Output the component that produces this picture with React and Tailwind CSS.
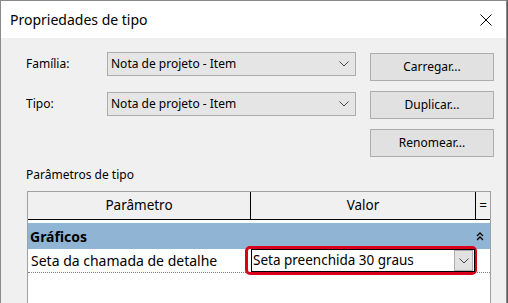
import React from 'react';

const ChevronDown = ({ className = '' }) => (
  <svg width="10" height="6" viewBox="0 0 10 6" className={className}>
    <path d="M0.5 0.5 L5 5 L9.5 0.5" fill="none" stroke="#444" strokeWidth="1" />
  </svg>
);

function Combo({ value }) {
  return (
    <div className="w-[249px] h-[24px] bg-[#e5e5e5] border border-[#adadad] flex items-center pl-[3px] pr-[6px]">
      <span className="flex-1 text-[12px] text-black">{value}</span>
      <ChevronDown />
    </div>
  );
}

function Button({ children, className = '' }) {
  return (
    <div className={`w-[124px] h-[28px] bg-[#e1e1e1] border border-[#adadad] flex items-center justify-center text-[12px] text-black ${className}`}>
      {children}
    </div>
  );
}

export default function App() {
  return (
    <div className="w-[508px] h-[303px] overflow-hidden bg-[#5b5b5b] font-['Noto_Sans',sans-serif]">
      <div className="w-[507px] h-[303px] border border-b-0 border-[#8a8a8a] flex flex-col">
        {/* Title bar */}
        <div className="h-[37px] bg-white flex items-center pl-[9px] pr-[14px] shrink-0">
          <span className="flex-1 text-[14px] text-black">Propriedades de tipo</span>
          <svg width="12" height="12" viewBox="0 0 12 12">
            <path d="M0.5 0.5 L11.5 11.5 M11.5 0.5 L0.5 11.5" stroke="#000" strokeWidth="1" />
          </svg>
        </div>

        {/* Body */}
        <div className="flex-1 bg-[#f0f0f0] pl-[25px] pt-[14px] flex flex-col">
          <div className="flex items-start h-[39px]">
            <span className="w-[81px] leading-[24px] text-[12px] text-black">Família:</span>
            <Combo value="Nota de projeto - Item" />
            <Button className="ml-[14px] mt-[1px]">Carregar...</Button>
          </div>
          <div className="flex items-start h-[38px]">
            <span className="w-[81px] leading-[24px] mt-[1px] text-[12px] text-black">Tipo:</span>
            <div className="mt-[1px]">
              <Combo value="Nota de projeto - Item" />
            </div>
            <Button className="ml-[14px]">Duplicar...</Button>
          </div>
          <div className="flex h-[28px]">
            <Button className="ml-[344px]">Renomear...</Button>
          </div>

          <div className="mt-[10px] h-[16px] leading-[16px] text-[12px] text-black">Parâmetros de tipo</div>

          {/* Table */}
          <div className="mt-[8px] ml-[1px] w-[464px] flex-1 bg-white border-l border-r border-t border-[#a0a0a0] flex flex-col">
            <div className="h-[28px] bg-[#f0f0f0] border-b border-black flex text-[13.5px] text-black">
              <div className="w-[223px] border-r border-black flex items-center justify-center">Parâmetro</div>
              <div className="w-[225px] border-r border-black flex items-center justify-center">Valor</div>
              <div className="flex-1 flex items-center justify-center">=</div>
            </div>
            <div className="h-[3px]" />
            <div className="h-[26px] bg-[#8fb4d4] flex items-center pl-[2px] pr-[6px]">
              <span className="flex-1 text-[14px] font-bold text-black">Gráficos</span>
              <svg width="8" height="9" viewBox="0 0 8 9">
                <path d="M1 4 L4 1 L7 4 M1 8 L4 5 L7 8" fill="none" stroke="#000" strokeWidth="1.3" />
              </svg>
            </div>
            <div className="relative h-[24px] border-b border-dotted border-[#808080] flex items-center">
              <span className="pl-[3px] w-[222px] text-[14px] text-black whitespace-nowrap">Seta da chamada de detalhe</span>
              <div className="absolute left-[217px] top-[-3px] w-[232px] h-[29px] border-[3px] border-[#d9001b] rounded-[5px]" />
              <div className="absolute left-[223px] top-0 w-[224px] h-[23px] bg-white border border-black flex items-center pl-[1px] pr-[1px]">
                <span className="flex-1 text-[13.5px] text-black whitespace-nowrap">Seta preenchida 30 graus</span>
                <div className="w-[19px] h-[21px] bg-[#e1e1e1] border border-[#adadad] flex items-center justify-center">
                  <ChevronDown />
                </div>
              </div>
            </div>
          </div>
        </div>
      </div>
    </div>
  );
}
